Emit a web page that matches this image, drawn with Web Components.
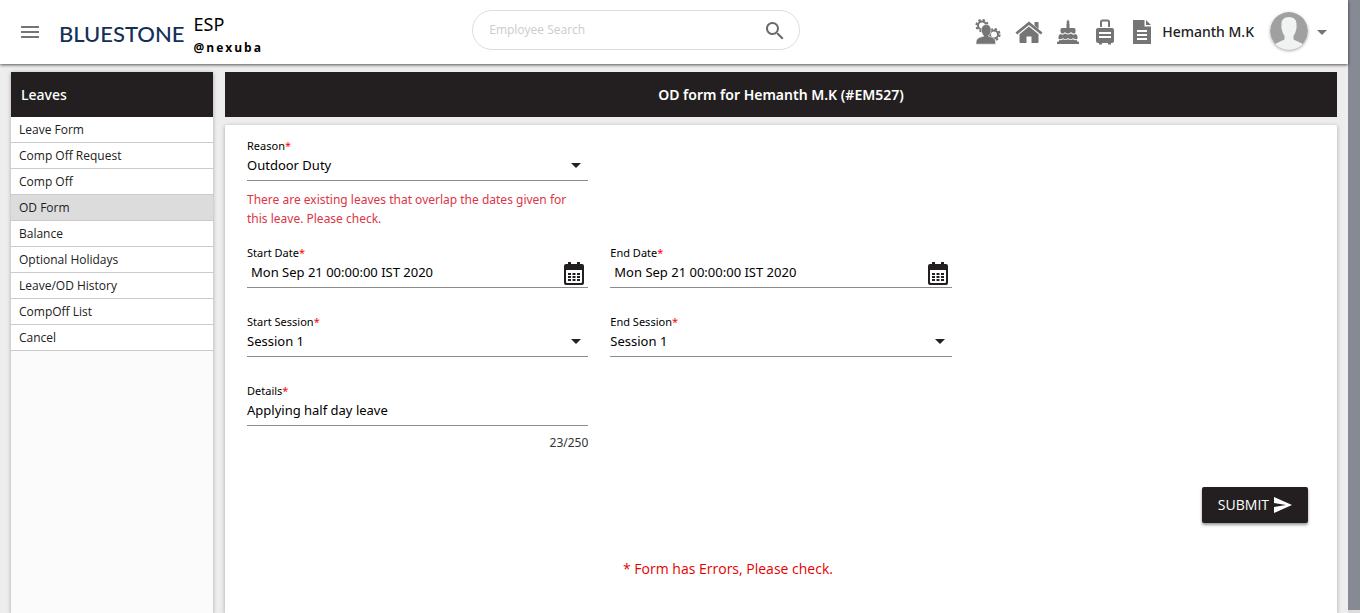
<!DOCTYPE html>
<html lang="en">
<head>
<meta charset="utf-8">
<title>Leaves - OD Form</title>
<style>
  body { margin: 0; background: #ededed; color: #212121; font-family: "Noto Sans", "Open Sans", sans-serif; font-size: 13px; }
</style>
</head>
<body>
<esp-app></esp-app>

<template id="esp-app">
  <style>
    :host { display: grid; grid-template-columns: minmax(0, 1fr) 12px; height: 100vh; overflow: hidden; }
    .page { display: flex; flex-direction: column; min-height: 0; }
    .body { flex: 1; display: grid; grid-template-columns: 202px minmax(0, 1fr); gap: 12px; padding: 8px 11px 0; min-height: 0; }
    .rail { background: #dcdcdc; padding-bottom: 3px; display: flex; }
    .thumb { flex: 1; background: #868a93; }
  </style>
  <div class="page">
    <esp-header></esp-header>
    <div class="body">
      <esp-sidebar heading="Leaves">
        <esp-nav-item>Leave Form</esp-nav-item>
        <esp-nav-item>Comp Off Request</esp-nav-item>
        <esp-nav-item>Comp Off</esp-nav-item>
        <esp-nav-item active>OD Form</esp-nav-item>
        <esp-nav-item>Balance</esp-nav-item>
        <esp-nav-item>Optional Holidays</esp-nav-item>
        <esp-nav-item>Leave/OD History</esp-nav-item>
        <esp-nav-item>CompOff List</esp-nav-item>
        <esp-nav-item>Cancel</esp-nav-item>
      </esp-sidebar>
      <esp-od-form></esp-od-form>
    </div>
  </div>
  <div class="rail" aria-hidden="true"><div class="thumb"></div></div>
</template>

<template id="esp-header">
  <style>
    :host { display: block; position: relative; background: #fff; box-shadow: 0 1px 3px rgba(0,0,0,.65); }
    header { display: grid; grid-template-columns: 6fr 328px 7fr; align-items: center; height: 64px; padding: 0 19px; box-sizing: border-box; }
    button { border: 0; background: none; padding: 0; display: flex; cursor: pointer; }
    .left, .right { display: flex; align-items: center; }
    .menu { width: 24px; margin: 0 16px 0 -1px; }
    .logo { font: 500 22px/32px Lato, sans-serif; color: #12305a; text-decoration: none; padding: 4px 0 0 1px; margin-right: 9px; }
    .brand { color: #000; padding-top: 8px; }
    .app { font-size: 18px; line-height: 24px; }
    .handle { font: 700 12px/24px "Open Sans", sans-serif; letter-spacing: 2px; }
    form { display: flex; align-items: center; height: 40px; box-sizing: border-box; border: 1px solid #ddd; border-radius: 20px; padding: 0 12px 0 16px; margin-bottom: 4px; }
    input { flex: 1; min-width: 0; border: 0; outline: 0; background: none; padding: 0; font: 12px/20px "Open Sans", sans-serif; color: #333; }
    input::placeholder { color: #ccc; opacity: 1; }
    .right { justify-content: flex-end; color: #757575; }
    nav { display: flex; align-items: center; gap: 14px; margin-right: 8px; }
    nav a { display: flex; color: inherit; }
    .user { font-size: 14px; font-weight: 500; line-height: 20px; color: #212121; margin-right: 16px; padding-left: 1px; white-space: nowrap; }
    .avatar { border-radius: 50%; box-shadow: 0 1px 3px rgba(0,0,0,.35); margin: -2px 7px 0 0; }
  </style>
  <header>
    <div class="left">
      <button class="menu" aria-label="Menu"><svg width="24" height="24" fill="#757575"><path d="M3 6h18v2H3zM3 11h18v2H3zM3 16h18v2H3z"/></svg></button>
      <a class="logo" href="#">BLUESTONE</a>
      <div class="brand"><div class="app">ESP</div><div class="handle">@nexuba</div></div>
    </div>
    <form role="search">
      <input type="text" placeholder="Employee Search" aria-label="Employee Search">
      <button type="button" aria-label="Search"><svg width="24" height="24" viewBox="0 0 24 24" fill="#6b6b6b"><path d="M15.500 15h-.8l-.3-.3A6.500 6.500 0 1 0 13.700 15.400l.3.300v.8l5 5 1.500-1.500zm-6 0a4.500 4.500 0 1 1 0-9 4.500 4.500 0 0 1 0 9z"/></svg></button>
    </form>
    <div class="right">
      <nav>
        <a href="#" aria-label="Employee tools"><svg width="26" height="28" viewBox="0 0 26 28" fill="none" stroke="#757575">
          <circle cx="7" cy="7.500" r="4" stroke-width="2"/><circle cx="7" cy="7.500" r="5.600" stroke-width="2" stroke-dasharray="2.400 2"/>
          <circle cx="19" cy="16.500" r="4" stroke-width="2"/><circle cx="19" cy="16.500" r="5.600" stroke-width="2" stroke-dasharray="2.400 2"/>
          <path d="M11.200 6.500c2.900 0 4.800 2.200 4.800 5.300 0 2.400-1 4.500-2.300 5.700v.8c3.500.8 5 1.700 6 3 .8 1.200 1 2.700 1 4.900H1c0-2.200.2-3.700 1-4.900 1-1.300 3-2.200 6.500-3v-.8c-1.300-1.200-2.200-3.300-2.200-5.700 0-3.100 2-5.300 4.900-5.300z" fill="#757575" stroke="#fff" stroke-width=".6"/></svg></a>
        <a href="#" aria-label="Home"><svg width="28" height="28" viewBox="0 0 28 28" fill="#757575"><path d="M14 3.500 27.500 14.500l-1.700 2L14 7 2.200 16.500.5 14.500zM19.500 4h4v7l-4-3.400z"/><path d="m14 8.500 9.500 7.700V24q0 1-1 1h-6v-6.500h-5V25h-6q-1 0-1-1v-7.800z"/></svg></a>
        <a href="#" aria-label="Birthdays"><svg width="22" height="28" viewBox="0 0 22 28" fill="#757575"><path d="M11 1.500l1.500 2.500-.5 1.500h.5V10H17q1.500 0 1.500 1.500V14q0 1.500-1.500 1.500T14 14q-1 1.500-3 1.500T8 14q-1 1.500-2.500 1.500T3.500 14v-2.500Q3.500 10 5 10h4.500V5.500h.5L9.500 4z"/><path d="M3.500 16q2.500 1.500 4.500-.5 3 2 6 0 2 2 4.500.5 2 .5 2 2.500V21q-2.500 1-4.500-1-2 2.500-5 0-3 2.500-5 0-2 2-4.500 1v-2.500q0-2 2-2.500z"/><path d="M2 22q2.500.5 4-.7 2 1.500 5 0 3 1.500 5 0 1.500 1.200 4 .7v1.500h1q1 0 1 1V26H0v-1.500q0-1 1-1h1z"/></svg></a>
        <a href="#" aria-label="Travel"><svg width="24" height="28" viewBox="0 0 24 28"><path d="M8 9V4q0-1.500 1.500-1.500h5Q16 2.500 16 4v5" fill="none" stroke="#757575" stroke-width="2"/><path d="M5 10h14q2 0 2 2v11q0 2-2 2h-1v1.500h-3V25H9v1.500H6V25H5q-2 0-2-2V12q0-2 2-2zm1 4v2h12v-2zm0 4v2h12v-2z" fill="#757575" fill-rule="evenodd"/></svg></a>
        <a href="#" aria-label="Documents"><svg width="22" height="28" viewBox="0 0 22 28" fill="#757575"><path d="M13.500 2v6.500H20V26H2V2zM6 12v2h10v-2zm0 4v2h10v-2zm0 4v2h10v-2z" fill-rule="evenodd"/><path d="m15 2 5 5h-5z"/></svg></a>
      </nav>
      <span class="user">Hemanth M.K</span>
      <svg class="avatar" width="38" height="38" viewBox="0 0 38 38"><defs><clipPath id="c"><circle cx="19" cy="19" r="19"/></clipPath></defs><g clip-path="url(#c)"><path fill="#a0a0a0" d="M0 0h38v38H0z"/><path fill="#f1f3f3" d="M19 5c5 0 8 3 7.500 8 0 2 .5 3-.4 4.500-.4 3-1.500 5-2.600 6v4l8.500 4 2 6.500H4L6 31.500l8.500-4v-4c-1.100-1-2.200-3-2.600-6-.9-1.500-.4-2.500-.4-4.500C11 8 14 5 19 5z"/></g></svg>
      <button aria-label="Account menu"><svg width="14" height="12" fill="#757575"><path d="M2 4h10l-5 5z"/></svg></button>
    </div>
  </header>
</template>

<template id="esp-sidebar">
  <style>
    :host { display: flex; flex-direction: column; background: #fbfbfb; box-shadow: 0 1px 4px rgba(0,0,0,.3); }
    h2 { margin: 0; background: #231f20; color: #fff; font-size: 14px; font-weight: 500; line-height: 45px; padding: 0 10px; }
  </style>
  <h2></h2>
  <nav><slot></slot></nav>
</template>

<template id="esp-nav-item">
  <style>
    :host { display: block; background: #fff; border-bottom: 1px solid #ccc; }
    :host([active]) { background: #dcdcdc; }
    a { display: block; padding: 0 8px; font: 500 12px/25px "Open Sans", sans-serif; color: #212121; text-decoration: none; }
  </style>
  <a href="#"><slot></slot></a>
</template>

<template id="esp-field">
  <style>
    :host { display: block; min-width: 0; color: #000; }
    label { display: block; font-size: 11px; line-height: 16px; }
    label span { color: #f00; }
    .control { display: flex; align-items: center; height: 22px; padding-bottom: 4px; border-bottom: 1px solid #8c8c8c; }
    input, select { flex: 1; width: 100%; min-width: 0; appearance: none; border: 0; border-radius: 0; outline: 0; background: none; padding: 0; margin: 0; color: #000; font: 13px/22px "Noto Sans", sans-serif; }
    .date input { padding-left: 4px; }
    .arrow { pointer-events: none; margin: 0 7px 0 -17px; }
    button { border: 0; background: none; padding: 3px 3px 0 0; display: flex; }
  </style>
  <label for="f"></label>
  <div class="control"></div>
  <slot></slot>
</template>

<template id="esp-od-form">
  <style>
    :host { display: flex; flex-direction: column; gap: 8px; min-width: 0; }
    h1 { margin: 0; background: #231f20; color: #fff; font-size: 14px; font-weight: 600; line-height: 45px; text-align: center; }
    form { flex: 1; background: #fff; border-radius: 2px 2px 0 0; padding: 13px 22px 0; box-shadow: 0 1px 4px rgba(0,0,0,.3); }
    .row { display: grid; grid-template-columns: repeat(3, minmax(0, 1fr)); gap: 22px; margin-bottom: 26px; }
    .row.noted { margin-bottom: 17px; }
    .error { margin: 9px 0 0; color: #dc3545; font-size: 12px; line-height: 19px; }
    .count { margin-top: 7px; text-align: right; font-size: 12px; line-height: 20px; color: #333; }
    .actions { display: flex; justify-content: flex-end; padding: 8px 7px 0 0; }
    .actions button { display: flex; align-items: center; gap: 4px; height: 36px; padding: 0 15px 0 16px; border: 0; border-radius: 2px; background: #231f20; color: #fff; font: 14px/20px "Open Sans", sans-serif; box-shadow: 0 2px 3px rgba(0,0,0,.4); }
    .summary { margin: 35px 106px 0 0; text-align: center; color: #e60000; font: 14px/22px "Open Sans", sans-serif; }
  </style>
  <h1>OD form for Hemanth M.K (#EM527)</h1>
  <form>
    <div class="row noted">
      <esp-field kind="select" label="Reason" value="Outdoor Duty">
        <p class="error">There are existing leaves that overlap the dates given for this leave. Please check.</p>
      </esp-field>
    </div>
    <div class="row">
      <esp-field kind="date" label="Start Date" value="Mon Sep 21 00:00:00 IST 2020"></esp-field>
      <esp-field kind="date" label="End Date" value="Mon Sep 21 00:00:00 IST 2020"></esp-field>
    </div>
    <div class="row">
      <esp-field kind="select" label="Start Session" value="Session 1"></esp-field>
      <esp-field kind="select" label="End Session" value="Session 1"></esp-field>
    </div>
    <div class="row">
      <esp-field kind="text" label="Details" value="Applying half day leave"><div class="count">23/250</div></esp-field>
    </div>
    <div class="actions"><button type="button">SUBMIT <svg width="20" height="20" viewBox="0 0 20 20" fill="#fff"><path d="M1 2l18 8-18 8v-6l12-2L1 8z"/></svg></button></div>
    <p class="summary" role="alert">* Form has Errors, Please check.</p>
  </form>
</template>

<script>
  class EspElement extends HTMLElement {
    constructor() {
      super();
      this.attachShadow({ mode: 'open' });
    }
    connectedCallback() {
      if (this.shadowRoot.childNodes.length) return;
      this.shadowRoot.append(document.getElementById(this.localName).content.cloneNode(true));
      this.render();
    }
    render() {}
  }
  class EspNavItem extends EspElement {
    render() {
      if (this.hasAttribute('active')) this.shadowRoot.querySelector('a').setAttribute('aria-current', 'page');
    }
  }
  class EspSidebar extends EspElement {
    render() { this.shadowRoot.querySelector('h2').textContent = this.getAttribute('heading'); }
  }
  const ARROW = '<svg class="arrow" width="10" height="5" fill="#212121"><path d="M0 0h10L5 5z"/></svg>';
  const CALENDAR = '<svg width="22" height="26" viewBox="0 0 22 26" fill="#231f20"><path fill-rule="evenodd" d="M3 3h2V1h3v2h6V1h3v2h2q2 0 2 2v17q0 2-2 2H3q-2 0-2-2V5q0-2 2-2zm0 6v12q0 1 1 1h14q1 0 1-1V9z"/><path d="M5 12h3v2H5zM9.500 12h3v2h-3zM14 12h3v2h-3zM5 15h3v2H5zM9.500 15h3v2h-3zM14 15h3v2h-3zM5 18h3v2H5zM9.500 18h3v2h-3zM14 18h3v2h-3z"/></svg>';
  class EspField extends EspElement {
    render() {
      const kind = this.getAttribute('kind');
      const label = this.shadowRoot.querySelector('label');
      const control = this.shadowRoot.querySelector('.control');
      label.innerHTML = this.getAttribute('label') + '<span>*</span>';
      control.classList.add(kind);
      const value = this.getAttribute('value');
      control.innerHTML = kind === 'select'
        ? `<select id="f"><option>${value}</option></select>${ARROW}`
        : `<input id="f" type="text" value="${value}">`;
      if (kind === 'date') control.insertAdjacentHTML('beforeend', `<button type="button" aria-label="Open calendar">${CALENDAR}</button>`);
    }
  }
  customElements.define('esp-nav-item', EspNavItem);
  customElements.define('esp-sidebar', EspSidebar);
  customElements.define('esp-field', EspField);
  customElements.define('esp-header', class extends EspElement {});
  customElements.define('esp-od-form', class extends EspElement {});
  customElements.define('esp-app', class extends EspElement {});
</script>
</body>
</html>
